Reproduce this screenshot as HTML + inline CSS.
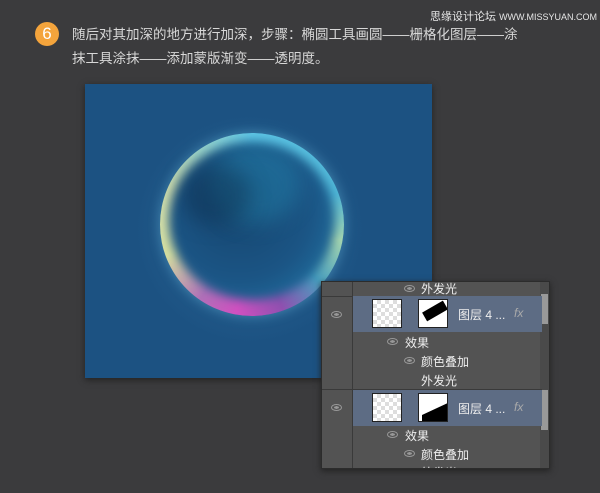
<!DOCTYPE html><html><head><meta charset="utf-8"><style>
*{margin:0;padding:0;box-sizing:border-box}
body{width:600px;height:493px;background:#3b3b3d;position:relative;overflow:hidden;font-family:"Liberation Sans","Noto Sans CJK SC",sans-serif}
.t{position:absolute;left:72px;color:#d8d8d8;font-size:13.5px;white-space:nowrap}
.num{position:absolute;left:35px;top:22px;width:24px;height:24px;border-radius:50%;background:#f4a43c;color:#fff;font-size:17px;text-align:center;line-height:24px}
.wm{position:absolute;left:430px;top:8px;color:#e6e6e6;font-size:11px}
.cv{position:absolute;left:85px;top:84px;width:347px;height:294px;background:#1c5282;box-shadow:0 2px 6px #222;overflow:hidden}
.p{position:absolute;left:321px;top:281px;width:229px;height:188px;background:#535353;border:1px solid #2c2c2c;box-shadow:0 2px 6px #222;overflow:hidden}
.r{position:absolute;left:0;width:220px;color:#eee;font-size:12px}
.hl{background:#5d6c84}
.eye{position:absolute;width:11px;height:7px;border-radius:50%;border:1.5px solid #999;background:radial-gradient(#999 35%,transparent 40%)}
.th{position:absolute;width:30px;height:29px;border:1px solid #222;background:repeating-conic-gradient(#ddd 0 25%,#fff 0 50%) 0 0/8px 8px}
.mk{position:absolute;width:30px;height:29px;border:1px solid #222;background:#fff;overflow:hidden}
.sb{position:absolute;right:0;top:0;width:9px;height:188px;background:#4a4a4a}
</style></head><body>
<div class="wm">思缘设计论坛 <span style="font-size:9px">WWW.MISSYUAN.COM</span></div>
<div class="num">6</div>
<div class="t" style="top:23px">随后对其加深的地方进行加深，步骤：椭圆工具画圆——栅格化图层——涂</div>
<div class="t" style="top:47px">抹工具涂抹——添加蒙版渐变——透明度。</div>
<div class="cv">
<div style="position:absolute;left:40px;top:20px;width:250px;height:250px;border-radius:50%;background:radial-gradient(circle,rgba(70,140,190,.35),transparent 65%)"></div>
<div style="position:absolute;left:75px;top:49px;width:184px;height:183px;border-radius:50%;background:conic-gradient(from 0deg,#60c8e8,#50b8d8 70deg,#a8d8b0 100deg,#4aa0c0 130deg,#9050b0 160deg,#d050c0 190deg,#b070b8 215deg,#d8e0a0 250deg,#d0e0b0 295deg,#60c8e8 360deg);box-shadow:0 0 12px rgba(120,200,230,.45)"></div>
<div style="position:absolute;left:84px;top:58px;width:166px;height:158px;border-radius:50%;background:radial-gradient(circle at 42% 42%,#164670 0%,#1b5585 55%,#2070a0 85%,#2a86b2 100%);filter:blur(5px)"></div>
<div style="position:absolute;left:125px;top:60px;width:90px;height:80px;border-radius:50%;background:rgba(40,160,200,.3);filter:blur(10px)"></div>
<div style="position:absolute;left:95px;top:80px;width:70px;height:60px;border-radius:50%;background:rgba(10,40,70,.4);filter:blur(10px)"></div>
</div>
<div class="p">
<div class="sb"><div style="position:absolute;left:1px;top:12px;width:7px;height:30px;background:#999"></div><div style="position:absolute;left:1px;top:108px;width:7px;height:40px;background:#999"></div></div>
<div style="position:absolute;left:30px;top:0;width:1px;height:188px;background:#3a3a3a"></div>
<div class="r" style="top:0;height:14px"><div class="eye" style="left:82px;top:3px"></div><span style="position:absolute;left:99px;top:-2px">外发光</span></div>
<div style="position:absolute;left:0;top:14px;width:220px;height:1px;background:#3a3a3a"></div>
<div class="r hl" style="top:14px;height:36px;left:31px;width:189px"></div>
<div class="eye" style="left:9px;top:29px"></div>
<div class="th" style="left:50px;top:17px"></div><div class="mk" style="left:96px;top:17px"><div style="position:absolute;left:4px;top:6px;width:24px;height:10px;background:#000;transform:rotate(-30deg)"></div></div>
<div class="r" style="top:24px;left:136px;width:80px">图层 4 ... <i style="position:absolute;left:56px;color:#aaa">fx</i></div>
<div class="r" style="top:52px"><div class="eye" style="left:65px;top:4px"></div><span style="position:absolute;left:83px">效果</span></div>
<div class="r" style="top:71px"><div class="eye" style="left:82px;top:4px"></div><span style="position:absolute;left:99px">颜色叠加</span></div>
<div class="r" style="top:90px"><span style="position:absolute;left:99px">外发光</span></div>
<div style="position:absolute;left:0;top:107px;width:220px;height:1px;background:#3a3a3a"></div>
<div class="r hl" style="top:108px;height:36px;left:31px;width:189px"></div>
<div class="eye" style="left:9px;top:122px"></div>
<div class="th" style="left:50px;top:111px"></div><div class="mk" style="left:96px;top:111px"><div style="position:absolute;left:3px;top:14px;width:30px;height:20px;background:#000;transform:skewY(-25deg)"></div></div>
<div class="r" style="top:118px;left:136px;width:80px">图层 4 ... <i style="position:absolute;left:56px;color:#aaa">fx</i></div>
<div class="r" style="top:145px"><div class="eye" style="left:65px;top:4px"></div><span style="position:absolute;left:83px">效果</span></div>
<div class="r" style="top:164px"><div class="eye" style="left:82px;top:4px"></div><span style="position:absolute;left:99px">颜色叠加</span></div>
<div class="r" style="top:182px"><span style="position:absolute;left:99px">外发光</span></div>
</div>
</body></html>
